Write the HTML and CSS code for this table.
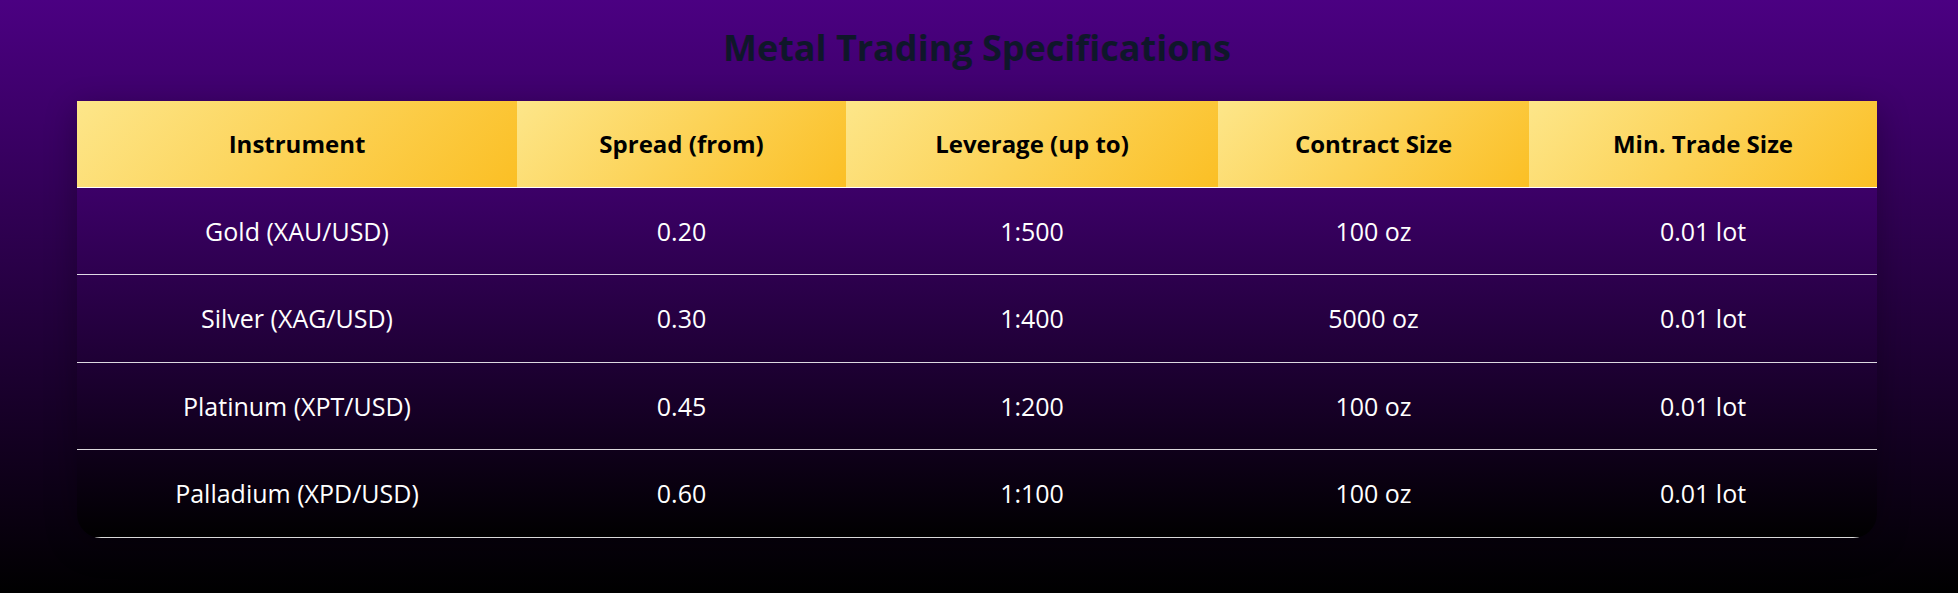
FILE: index.html
```html
<!DOCTYPE html>
<html lang="en">
<head>
<meta charset="utf-8">
<title>Metal Trading Specifications</title>
<link rel="stylesheet" href="styles.css">
</head>
<body>
<main class="page">
  <h1 class="title">Metal Trading Specifications</h1>
  <div class="table-wrap">
    <table class="specs">
      <colgroup>
        <col class="c1"><col class="c2"><col class="c3"><col class="c4"><col class="c5">
      </colgroup>
      <thead>
        <tr>
          <th>Instrument</th>
          <th>Spread (from)</th>
          <th>Leverage (up to)</th>
          <th>Contract Size</th>
          <th>Min. Trade Size</th>
        </tr>
      </thead>
      <tbody>
        <tr><td>Gold (XAU/USD)</td><td>0.20</td><td>1:500</td><td>100 oz</td><td>0.01 lot</td></tr>
        <tr><td>Silver (XAG/USD)</td><td>0.30</td><td>1:400</td><td>5000 oz</td><td>0.01 lot</td></tr>
        <tr><td>Platinum (XPT/USD)</td><td>0.45</td><td>1:200</td><td>100 oz</td><td>0.01 lot</td></tr>
        <tr><td>Palladium (XPD/USD)</td><td>0.60</td><td>1:100</td><td>100 oz</td><td>0.01 lot</td></tr>
      </tbody>
    </table>
  </div>
</main>
</body>
</html>
```

FILE: styles.css
```css
html, body {
  margin: 0;
  padding: 0;
}
body {
  min-height: 593px;
  background: linear-gradient(to bottom, #4b0082 0%, #000000 100%);
  font-family: "Open Sans", "Noto Sans", sans-serif;
  color: #ffffff;
}
.page {
  padding: 18px 4px 0 0;
}
.title {
  margin: 0 0 23px;
  text-align: center;
  font-size: 36px;
  line-height: 60px;
  font-weight: 700;
  color: #0f172a;
}
.table-wrap {
  width: 1800px;
  margin: 0 auto;
  border-radius: 0 0 24px 24px;
  overflow: hidden;
  background: linear-gradient(to bottom, #4b0082 0%, #000000 100%);
  box-shadow: 0 8px 32px rgba(0, 0, 0, 0.3);
}
.specs {
  width: 100%;
  border-collapse: collapse;
  table-layout: fixed;
}
.c1 { width: 440px; }
.c2 { width: 329px; }
.c3 { width: 372px; }
.c4 { width: 311px; }
.c5 { width: 348px; }
.specs th {
  height: 86px;
  padding: 0 10px;
  box-sizing: border-box;
  background: linear-gradient(135deg, #fde68a 0%, #fbbf24 100%);
  color: #000000;
  font-size: 24px;
  font-weight: 700;
  text-align: center;
  border-bottom: 1px solid #ffffff;
}
.specs td {
  height: 87.5px;
  padding: 0 10px;
  box-sizing: border-box;
  font-size: 25px;
  text-align: center;
  border-bottom: 1px solid rgba(255, 255, 255, 0.85);
}
```
